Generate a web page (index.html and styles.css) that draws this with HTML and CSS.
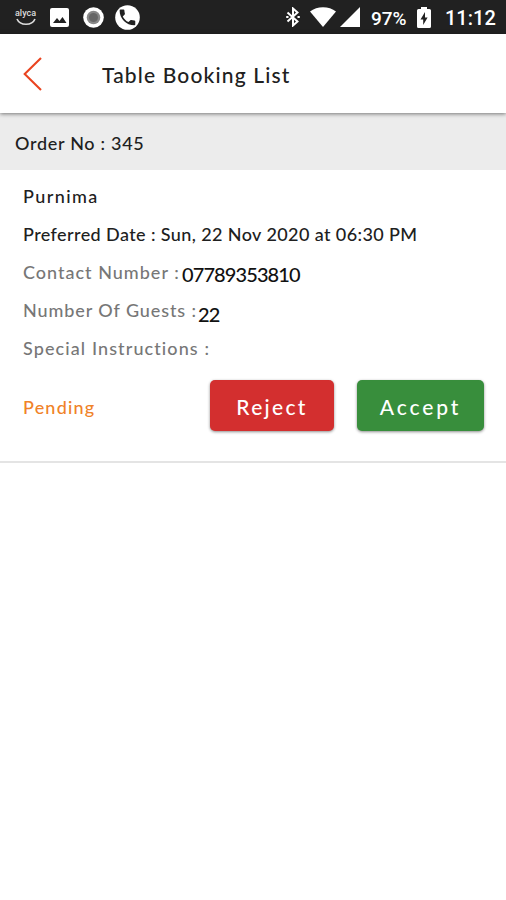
FILE: index.html
```
<!DOCTYPE html>
<html lang="en">
<head>
  <meta charset="UTF-8">
  <title>Table Booking List</title>
  <link rel="stylesheet" href="styles.css">
</head>
<body>
  <div class="status-bar">
    <div class="status-left">
      <div class="brand">
        <span>alyca</span>
        <svg width="20" height="8" viewBox="0 0 20 8"><path d="M1 1C4 8 16 8 19 1" fill="none" stroke="#ddd" stroke-width="1.6"/></svg>
      </div>
      <svg class="picture" width="19" height="19" viewBox="0 0 19 19"><rect width="19" height="19" rx="2" fill="#fff"/><path d="M3 15l4-5 2.500 3 3-4 4 6z" fill="#212121"/></svg>
      <svg class="record" width="21" height="21" viewBox="0 0 21 21"><circle cx="10.500" cy="10.500" r="10.300" fill="#fff"/><circle cx="10.500" cy="10.500" r="6.800" fill="#888"/><circle cx="10.500" cy="10.500" r="4.500" fill="#666"/></svg>
      <svg class="call" width="25" height="25" viewBox="0 0 25 25"><circle cx="12.500" cy="12.500" r="12.300" fill="#fff"/><path transform="translate(2 2) scale(.87)" d="M6.620 10.790c1.440 2.830 3.760 5.140 6.590 6.590l2.200-2.200c.27-.27.67-.36 1.020-.24 1.120.37 2.330.57 3.570.57.55 0 1 .45 1 1V20c0 .55-.45 1-1 1C10.610 21 3 13.390 3 4c0-.55.45-1 1-1h3.500c.55 0 1 .45 1 1 0 1.250.2 2.450.57 3.570.11.35.03.74-.25 1.020z" fill="#212121"/></svg>
    </div>
    <div class="status-right">
      <svg class="bluetooth" width="14" height="20" viewBox="0 0 14 20"><path d="M1.500 5.500l10 9L7 18.500v-17l4.500 4-10 9" fill="none" stroke="#fff" stroke-width="2"/><path d="M.2 10h2.300M11.500 10h2.300" stroke="#fff" stroke-width="1.800"/></svg>
      <svg class="wifi" width="26" height="20" viewBox="0 0 26 20"><path d="M0 4.500C7-1.200 19-1.200 26 4.500L13 20z" fill="#fff"/></svg>
      <svg class="signal" width="20" height="20" viewBox="0 0 20 20"><path d="M0 20L20 0v20z" fill="#fff"/></svg>
      <span class="percent">97%</span>
      <svg class="battery" width="14" height="21" viewBox="0 0 14 21"><path d="M4 0h6v2h2.500q1.500 0 1.500 1.500v16q0 1.500-1.500 1.500h-11Q0 21 0 19.500v-16Q0 2 1.500 2H4z" fill="#fff"/><path d="M8 5L3.500 12.500H6.200V18l4.400-7.500H8z" fill="#212121"/></svg>
      <span class="time">11:12</span>
    </div>
  </div>

  <div class="header">
    <svg class="back" width="20" height="34" viewBox="0 0 20 34"><path d="M18 1L1.700 17 18 33" fill="none" stroke="#ea4420" stroke-width="2.100"/></svg>
    <span class="title">Table Booking List</span>
  </div>

  <div class="order-no">Order No : 345</div>

  <div class="booking">
    <div class="row name">Purnima</div>
    <div class="row date">Preferred Date : Sun, 22 Nov 2020 at 06:30 PM</div>
    <div class="row"><span class="label contact">Contact Number :</span><span class="value phone">07789353810</span></div>
    <div class="row"><span class="label guests">Number Of Guests :</span><span class="value count">22</span></div>
    <div class="row"><span class="label special">Special Instructions :</span></div>
    <div class="actions">
      <span class="pending">Pending</span>
      <button class="btn reject">Reject</button>
      <button class="btn accept">Accept</button>
    </div>
  </div>
</body>
</html>
```
FILE: styles.css
```
* {
  box-sizing: border-box;
}

body {
  margin: 0;
  background: #fff;
  color: #202020;
  font-family: Lato, sans-serif;
  font-size: 18px;
  font-weight: 500;
  white-space: nowrap;
}

svg {
  display: block;
}

.status-bar {
  display: flex;
  justify-content: space-between;
  height: 34px;
  padding: 0 11px 0 15px;
  background: #212121;
  color: #fff;
  font-family: Roboto, sans-serif;
  font-size: 20px;
  font-weight: 500;
}

.status-left,
.status-right {
  display: flex;
  align-items: center;
}

.brand {
  width: 22px;
  margin-right: 13px;
  font-size: 9px;
  line-height: 8px;
  color: #ddd;
}

.brand svg {
  margin: 1px 0 0 1px;
}

.picture {
  margin-right: 14px;
}

.record {
  margin-right: 11px;
}

.bluetooth {
  margin-right: 10px;
}

.wifi {
  margin-right: 4px;
}

.signal {
  margin-right: 11px;
}

.percent {
  width: 46px;
  padding-top: 2px;
  font-size: 19px;
}

.time {
  width: 50px;
  margin-left: 14px;
  padding-top: 2px;
}

.header {
  position: relative;
  display: flex;
  align-items: center;
  height: 79px;
  padding-left: 23px;
  background: #fff;
  box-shadow: 0 1px 4px rgba(0, 0, 0, 0.5);
}

.title {
  margin: 2px 0 0 59px;
  font-size: 21px;
  letter-spacing: 1.15px;
}

.order-no {
  height: 57px;
  padding-left: 15px;
  background: #ececec;
  line-height: 61px;
  letter-spacing: 0.7px;
}

.booking {
  height: 293px;
  padding: 7px 22px 0 23px;
  border-bottom: 2px solid #e4e4e4;
}

.row {
  display: flex;
  height: 38px;
  line-height: 38px;
}

.name {
  letter-spacing: 1.4px;
}

.date {
  letter-spacing: 0.4px;
}

.label {
  color: #777;
  letter-spacing: 1px;
}

.contact {
  width: 159px;
}

.guests {
  width: 175px;
  letter-spacing: 0.9px;
}

.special {
  letter-spacing: 1.1px;
}

.value {
  padding-top: 2px;
  font-size: 20px;
  letter-spacing: -0.9px;
  color: #111;
}

.count {
  padding-top: 4px;
}

.actions {
  display: flex;
  align-items: center;
  margin-top: 12px;
  height: 52px;
}

.pending {
  width: 187px;
  margin-top: 4px;
  color: #f08228;
  letter-spacing: 1.2px;
}

.btn {
  height: 51px;
  padding: 3px 0 0;
  border: 0;
  border-radius: 5px;
  color: #fff;
  font-family: Lato, sans-serif;
  font-size: 21px;
  font-weight: 500;
  letter-spacing: 2.3px;
  box-shadow: 0 1px 3px rgba(0, 0, 0, 0.45);
}

.reject {
  width: 124px;
  margin-right: 23px;
  background: #d32f2f;
}

.accept {
  width: 127px;
  background: #388e3c;
  letter-spacing: 2.9px;
}
```
